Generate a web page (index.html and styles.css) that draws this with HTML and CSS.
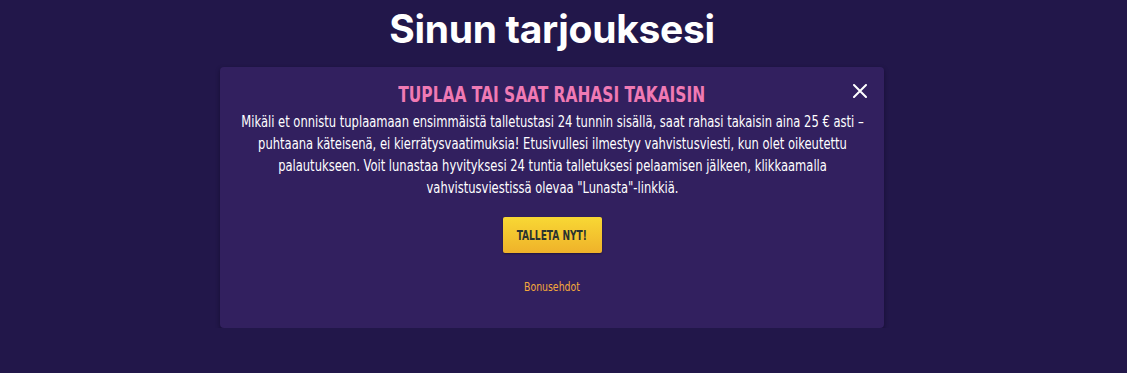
FILE: index.html
```html
<!DOCTYPE html>
<html lang="fi">
<head>
<meta charset="utf-8">
<title>Sinun tarjouksesi</title>
<link rel="stylesheet" href="styles.css">
</head>
<body>
<main class="page">
  <h1 class="page-title">Sinun tarjouksesi</h1>
  <section class="offer">
    <button class="offer-close" aria-label="Sulje">
      <svg width="14" height="14" viewBox="0 0 14 14"><path d="M1 1 L13 13 M13 1 L1 13" stroke="#fff" stroke-width="2" stroke-linecap="round"/></svg>
    </button>
    <h2 class="offer-title"><span class="narrow">TUPLAA TAI SAAT RAHASI TAKAISIN</span></h2>
    <p class="offer-text">Mikäli et onnistu tuplaamaan ensimmäistä talletustasi 24 tunnin sisällä, saat rahasi takaisin aina 25 € asti – puhtaana käteisenä, ei kierrätysvaatimuksia! Etusivullesi ilmestyy vahvistusviesti, kun olet oikeutettu palautukseen. Voit lunastaa hyvityksesi 24 tuntia talletuksesi pelaamisen jälkeen, klikkaamalla vahvistusviestissä olevaa "Lunasta"-linkkiä.</p>
    <button class="offer-cta"><span class="narrow">TALLETA NYT!</span></button>
    <a class="offer-terms" href="#"><span class="narrow">Bonusehdot</span></a>
  </section>
</main>
</body>
</html>
```
FILE: styles.css
```css
html, body {
  margin: 0;
  padding: 0;
}
body {
  background: #22174a;
  font-family: "DejaVu Sans Condensed", "Liberation Sans", sans-serif;
  color: #fff;
}
.page {
  display: flex;
  flex-direction: column;
  align-items: center;
  padding: 4px 23px 0 0;
}
.page-title {
  margin: 0;
  font-family: "Inter", "Lato", sans-serif;
  font-weight: 700;
  font-size: 39px;
  line-height: 50px;
  letter-spacing: -0.3px;
  color: #fff;
  height: 63px;
}
.narrow {
  display: inline-block;
  white-space: nowrap;
}
.offer {
  position: relative;
  width: 664px;
  height: 261px;
  box-sizing: border-box;
  background: #32205f;
  border-radius: 4px;
  box-shadow: 0 2px 4px rgba(10, 5, 30, 0.5);
  display: flex;
  flex-direction: column;
  align-items: center;
  padding: 15px 10px 0;
}
.offer-close {
  position: absolute;
  right: 17px;
  top: 17px;
  background: none;
  border: 0;
  padding: 0;
  width: 14px;
  height: 14px;
  cursor: pointer;
}
.offer-close svg { display: block; }
.offer-title {
  margin: 0;
  font-size: 22px;
  line-height: 26px;
  font-weight: 700;
  color: #f07ab4;
}
.offer-title .narrow {
  transform: scaleX(0.78);
}
.offer-text {
  flex: none;
  width: 755px;
  margin: 3px -56px 0;
  font-size: 15px;
  line-height: 22px;
  text-align: center;
  transform: scaleX(0.855);
}
.offer-cta {
  margin-top: 18px;
  width: 99px;
  height: 36px;
  border: 0;
  border-radius: 2px;
  background: linear-gradient(#f8d834, #efb22a);
  color: #2a3330;
  font-family: inherit;
  font-weight: 700;
  font-size: 14px;
  padding: 0;
  box-shadow: 0 1px 2px rgba(0,0,0,0.35);
  cursor: pointer;
}
.offer-cta .narrow {
  transform: scaleX(0.72);
}
.offer-terms {
  margin-top: 26px;
  font-size: 13px;
  color: #f5a83a;
  text-decoration: none;
}
.offer-terms .narrow {
  transform: scaleX(0.8);
}
```
